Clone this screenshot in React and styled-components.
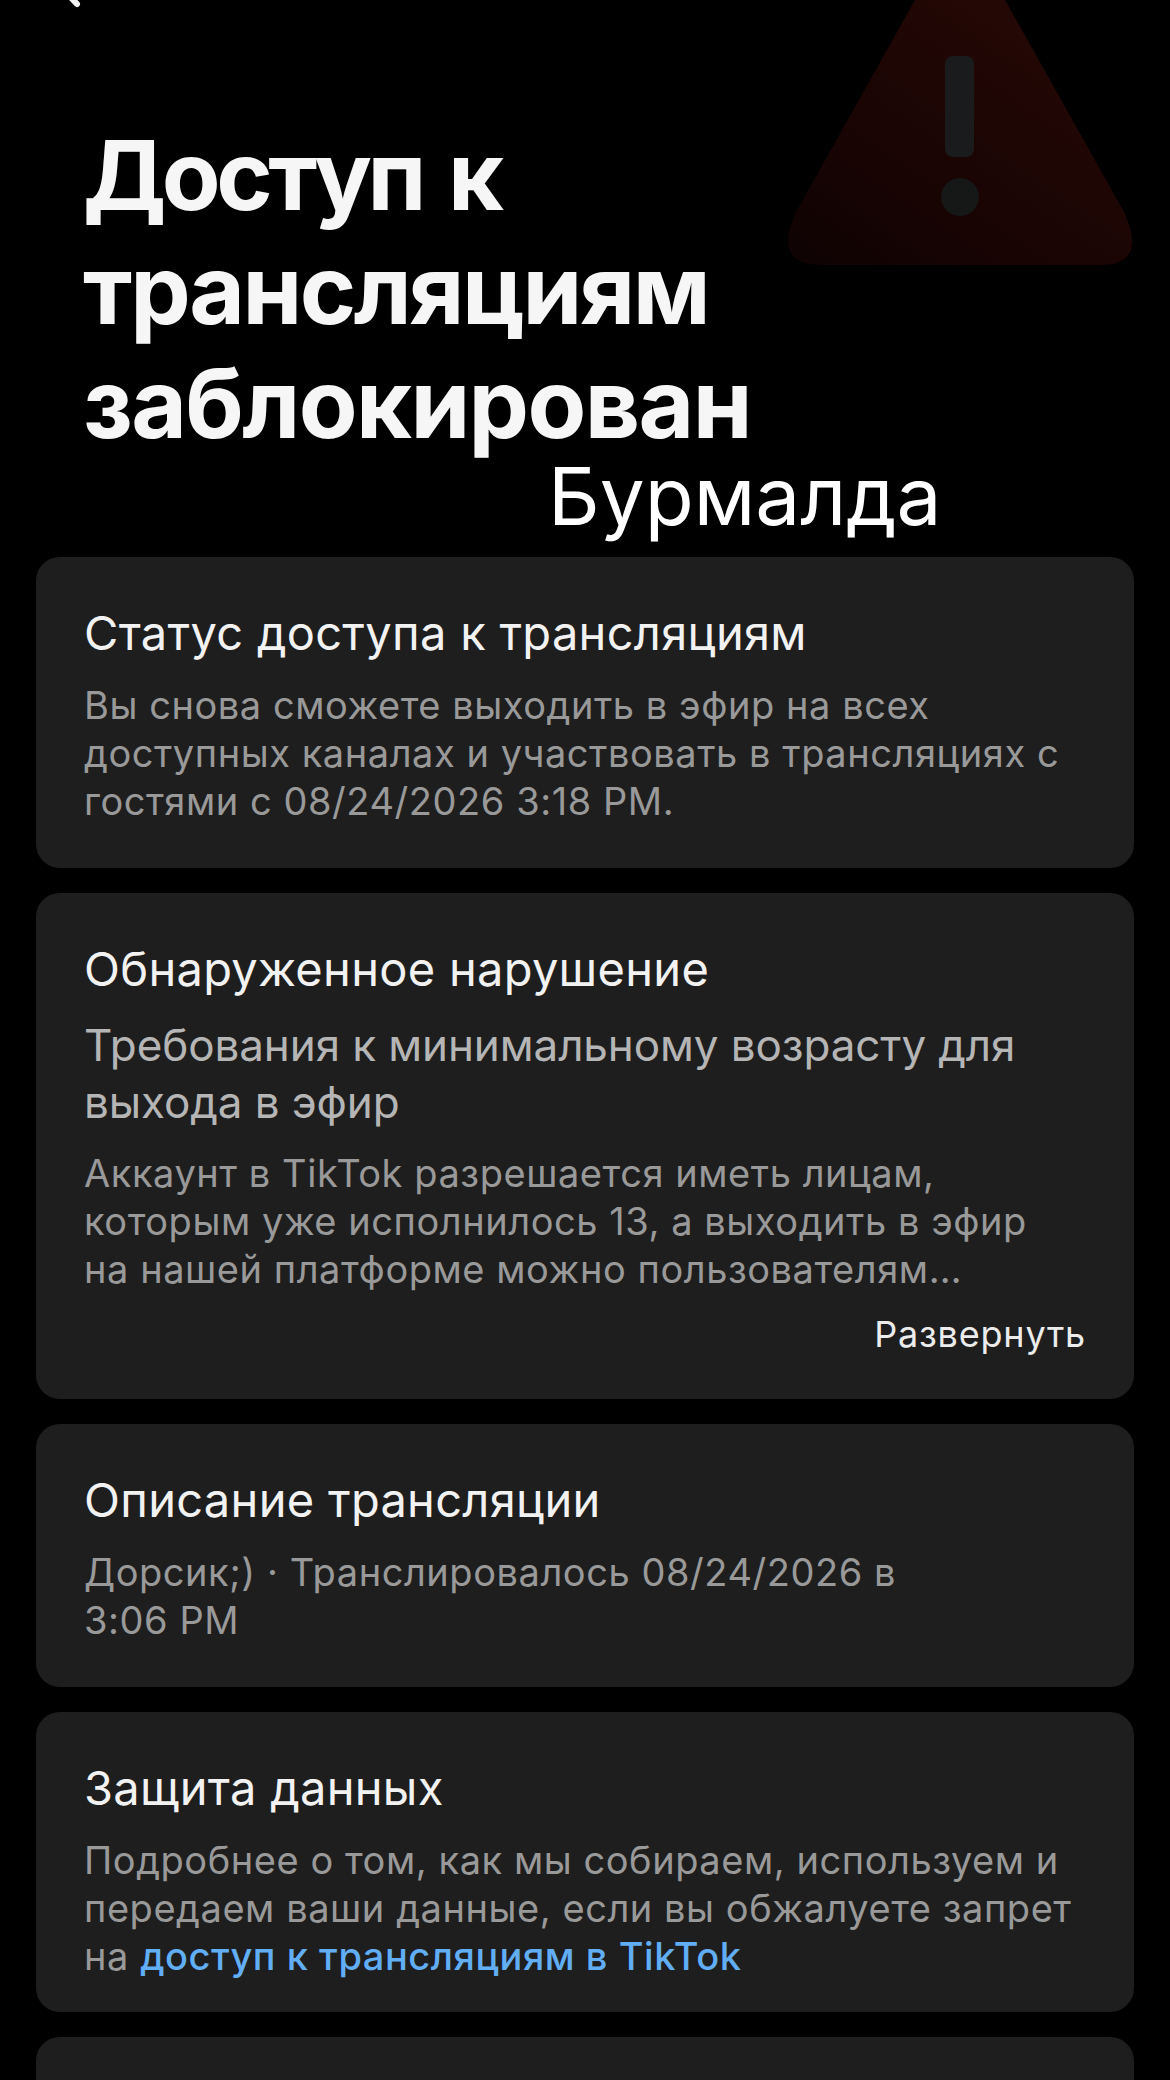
import React from 'react';
import styled, { createGlobalStyle } from 'styled-components';

const GlobalStyle = createGlobalStyle`
  html, body {
    margin: 0;
    padding: 0;
    background: #000;
  }
  * {
    box-sizing: border-box;
  }
`;

const Page = styled.div`
  position: relative;
  width: 1170px;
  height: 2080px;
  overflow: hidden;
  background: #000;
  font-family: Inter, 'Noto Sans', sans-serif;
`;

const BackIcon = styled.svg`
  position: absolute;
  top: 0;
  left: 50px;
  width: 40px;
  height: 10px;
`;

const WarningIcon = styled.svg`
  position: absolute;
  top: 0;
  left: 760px;
  width: 410px;
  height: 290px;
`;

const Header = styled.header`
  position: relative;
  height: 557px;
  padding: 118px 0 0 83px;
`;

const Title = styled.h1`
  margin: 0;
  font-size: 96px;
  line-height: 114px;
  font-weight: 700;
  color: #f6f6f6;
`;

const TitleLine = styled.span`
  display: block;
  letter-spacing: ${(p) => p.$spacing}px;
  word-spacing: ${(p) => p.$wordGap || 0}px;
`;

const Overlay = styled.div`
  margin: -8px 0 0 465px;
  font-size: 80px;
  line-height: 88px;
  font-weight: 400;
  color: #fff;
`;

const List = styled.main`
  display: flex;
  flex-direction: column;
  gap: 25px;
  padding: 0 36px;
`;

const Card = styled.section`
  background: #1e1e1e;
  border-radius: 24px;
  padding: 50px 48px 30px;
  min-height: ${(p) => p.$height}px;
`;

const CardTitle = styled.h2`
  margin: 0 0 22px;
  font-size: 47px;
  line-height: 52px;
  font-weight: 400;
  letter-spacing: 0.3px;
  color: #f2f2f2;
`;

const Subtitle = styled.h3`
  margin: 0 0 18px;
  font-size: 44px;
  line-height: 57px;
  font-weight: 400;
  letter-spacing: -0.1px;
  color: #b5b5b5;
`;

const Body = styled.p`
  margin: 0;
  font-size: 38px;
  line-height: 48px;
  letter-spacing: 0.55px;
  color: #999;
`;

const Expand = styled.div`
  margin-top: 17px;
  text-align: right;
  font-size: 36px;
  line-height: 48px;
  letter-spacing: 0.8px;
  color: #ececec;
`;

const Link = styled.span`
  font-weight: 500;
  color: #62aef5;
`;

export default function App() {
  return (
    <Page>
      <GlobalStyle />
      <BackIcon viewBox="50 0 40 10">
        <path d="M60 -14 L77 4" stroke="#f2f2f2" strokeWidth="6" strokeLinecap="round" fill="none" />
      </BackIcon>
      <WarningIcon viewBox="760 0 410 290">
        <defs>
          <linearGradient id="warn" x1="0.1" y1="1" x2="0.8" y2="0.2">
            <stop offset="0" stopColor="#100303" />
            <stop offset="0.35" stopColor="#170403" />
            <stop offset="1" stopColor="#240805" />
          </linearGradient>
        </defs>
        <path
          d="M915 0 L1005 0 L1124 212 Q1148 265 1100 265 L822 265 Q772 265 796 212 Z"
          fill="url(#warn)"
        />
        <rect x="945" y="56" width="29" height="101" rx="8" fill="#191b1d" />
        <circle cx="960" cy="197" r="19" fill="#161717" />
      </WarningIcon>

      <Header>
        <Title>
          <TitleLine $spacing={-4.5} $wordGap={8}>Доступ к</TitleLine>
          <TitleLine $spacing={-2.5}>трансляциям</TitleLine>
          <TitleLine $spacing={-1.6}>заблокирован</TitleLine>
        </Title>
        <Overlay>Бурмалда</Overlay>
      </Header>

      <List>
        <Card $height={311}>
          <CardTitle>Статус доступа к трансляциям</CardTitle>
          <Body>
            Вы снова сможете выходить в эфир на всех
            <br />
            доступных каналах и участвовать в трансляциях с
            <br />
            гостями с 08/24/2026 3:18 PM.
          </Body>
        </Card>

        <Card $height={506}>
          <CardTitle>Обнаруженное нарушение</CardTitle>
          <Subtitle>
            Требования к минимальному возрасту для
            <br />
            выхода в эфир
          </Subtitle>
          <Body>
            Аккаунт в TikTok разрешается иметь лицам,
            <br />
            которым уже исполнилось 13, а выходить в эфир
            <br />
            на нашей платформе можно пользователям…
          </Body>
          <Expand>Развернуть</Expand>
        </Card>

        <Card $height={263}>
          <CardTitle>Описание трансляции</CardTitle>
          <Body>
            Дорсик;) · Транслировалось 08/24/2026 в
            <br />
            3:06 PM
          </Body>
        </Card>

        <Card $height={300}>
          <CardTitle>Защита данных</CardTitle>
          <Body>
            Подробнее о том, как мы собираем, используем и
            <br />
            передаем ваши данные, если вы обжалуете запрет
            <br />
            на <Link>доступ к трансляциям в TikTok</Link>
          </Body>
        </Card>

        <Card $height={120} />
      </List>
    </Page>
  );
}
